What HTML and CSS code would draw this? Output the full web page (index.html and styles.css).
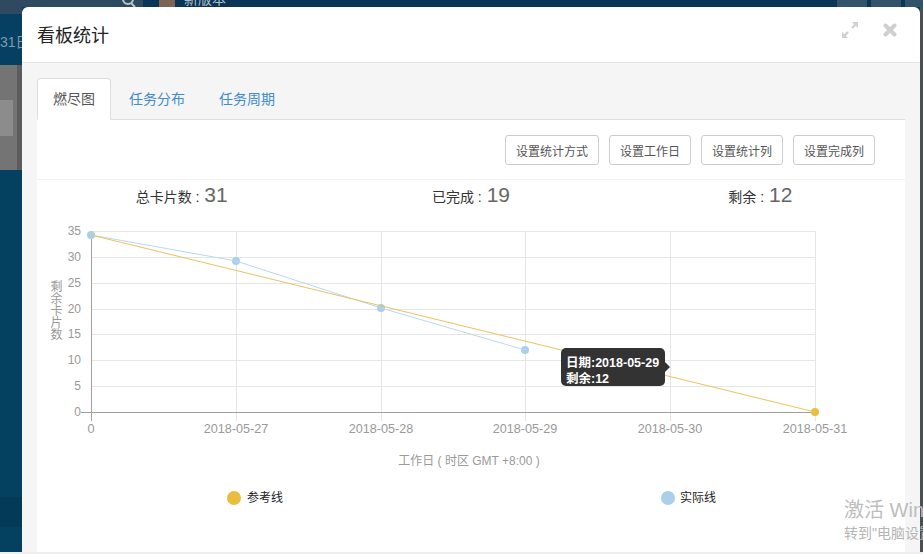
FILE: index.html
```html
<!DOCTYPE html>
<html lang="zh-CN">
<head>
    <meta charset="UTF-8">
    <meta name="viewport" content="width=device-width, initial-scale=1.0">
    <title>看板统计</title>
    <link rel="stylesheet" href="styles.css">
</head>
<body>

<!-- page behind the modal -->
<div class="backdrop">
    <div class="topBar">
        <div class="topSearch">
            <svg width="14" height="7" viewBox="0 0 14 7"><circle cx="6" cy="-1" r="5" fill="none" stroke="#b9c4cc" stroke-width="2"/><path d="M9 3l4 4" stroke="#b9c4cc" stroke-width="2"/></svg>
        </div>
        <div class="topAvatar"></div>
        <div class="topVersion">新版本</div>
        <div class="topIcons">
            <span class="topIcon small"></span>
            <span class="topIcon wide"></span>
            <span class="topIcon"></span>
        </div>
    </div>
    <div class="backMain">
        <div class="side">
            <div class="sideSlate"></div>
            <div class="sideDate">31日</div>
            <div class="sideGray"><div class="sideGrayInner"></div></div>
            <div class="sideBlue"></div>
            <div class="sideDark"></div>
            <div class="sideBlueEnd"></div>
        </div>
        <div class="edge"></div>
    </div>
    <div class="bottomStrip"></div>
</div>

<div class="modal">
    <div class="modalHeader">
        <div class="modalTitle">看板统计</div>
        <div class="modalTools">
            <svg class="toolIcon" width="18" height="18" viewBox="0 0 18 18">
                <path d="M11 1h6v6l-2.200-2.200-3 3-1.600-1.600 3-3zM7 17H1v-6l2.200 2.200 3-3 1.600 1.600-3 3z" fill="#d0d0d0"/>
            </svg>
            <svg class="toolIcon" width="14" height="14" viewBox="0 0 14 14">
                <path d="M2.500 2.500l9 9M11.500 2.500l-9 9" stroke="#cfcfcf" stroke-width="4" stroke-linecap="round"/>
            </svg>
        </div>
    </div>

    <div class="modalBody">
        <ul class="tabs">
            <li class="tab active">燃尽图</li>
            <li class="tab">任务分布</li>
            <li class="tab">任务周期</li>
        </ul>

        <div class="panel">
            <div class="toolbar">
                <button class="btn">设置统计方式</button>
                <button class="btn">设置工作日</button>
                <button class="btn">设置统计列</button>
                <button class="btn">设置完成列</button>
            </div>

            <div class="stats">
                <div class="stat">总卡片数 : <span class="statNum">31</span></div>
                <div class="stat">已完成 : <span class="statNum">19</span></div>
                <div class="stat">剩余 : <span class="statNum">12</span></div>
            </div>

            <div class="chart">
                <!-- viewBox uses page coordinates, plot area is 91..815 x 231..412 -->
                <svg class="chartSvg" width="868" height="330" viewBox="37 212 868 330">
                    <g class="grid">
                        <path d="M91 231H815M91 257H815M91 283H815M91 309H815M91 334H815M91 360H815M91 386H815"/>
                        <path d="M236 231V421M381 231V421M525 231V421M670 231V421M815 231V421"/>
                    </g>
                    <path class="axis" d="M81 412H815M91 231V421"/>

                    <g class="tickY">
                        <text x="81" y="235">35</text>
                        <text x="81" y="261">30</text>
                        <text x="81" y="287">25</text>
                        <text x="81" y="313">20</text>
                        <text x="81" y="338">15</text>
                        <text x="81" y="364">10</text>
                        <text x="81" y="390">5</text>
                        <text x="81" y="416">0</text>
                    </g>
                    <g class="tickX">
                        <text x="91" y="433">0</text>
                        <text x="236" y="433">2018-05-27</text>
                        <text x="381" y="433">2018-05-28</text>
                        <text x="525" y="433">2018-05-29</text>
                        <text x="670" y="433">2018-05-30</text>
                        <text x="815" y="433">2018-05-31</text>
                    </g>
                    <text class="titleY" x="55" y="280">剩余卡片数</text>
                    <text class="titleX" x="469" y="465">工作日 ( 时区 GMT +8:00 )</text>

                    <circle class="dotRef" cx="815" cy="412" r="4"/>
                    <circle class="dotReal" cx="91" cy="235" r="4"/>
                    <circle class="dotReal" cx="236" cy="261" r="4"/>
                    <circle class="dotReal" cx="381" cy="308" r="4"/>
                    <circle class="dotReal" cx="525" cy="350" r="4"/>
                    <polyline class="lineReal" points="91,235 236,261 381,308 525,350"/>
                    <polyline class="lineRef" points="91,235 815,412"/>

                    <circle class="dotRef" cx="234" cy="498" r="7"/>
                    <text class="legend" x="247" y="502">参考线</text>
                    <circle class="dotReal" cx="668" cy="498" r="7"/>
                    <text class="legend" x="680" y="502">实际线</text>
                </svg>
                <div class="tooltip">日期:2018-05-29<br>剩余:12</div>
            </div>
        </div>
    </div>
</div>

<div class="watermark">
    <div class="wmTitle">激活 Windows</div>
    <div class="wmSub">转到"电脑设置"以激活 Windows。</div>
</div>

</body>
</html>
```

FILE: styles.css
```css
* {
  box-sizing: border-box;
}
html, body {
  height: 100%;
}
body {
  margin: 0;
  overflow: hidden;
  position: relative;
  background-color: #04405f;
  font-family: "Liberation Sans", "Noto Sans CJK SC", sans-serif;
  font-size: 14px;
  color: #333;
}

/* behind the modal */
.backdrop {
  display: flex;
  flex-direction: column;
  height: 100%;
}
.topBar {
  display: flex;
  height: 7px;
  flex: none;
  overflow: hidden;
  background-color: #0a3557;
}
.topSearch {
  width: 143px;
  background-color: #2f4a60;
  padding-left: 122px;
}
.topSearch svg {
  display: block;
}
.topAvatar {
  width: 16px;
  margin-left: 16px;
  background-color: #7c6352;
}
.topVersion {
  margin-left: 9px;
  font-size: 14px;
  line-height: 10px;
  margin-top: -6px;
  color: #aebbc5;
}
.topIcons {
  margin-left: auto;
  display: flex;
  gap: 4px;
}
.topIcon {
  width: 18px;
  background-color: #33536b;
}
.topIcon.wide {
  width: 30px;
}
.topIcon.small {
  width: 30px;
}
.backMain {
  flex: 1;
  display: flex;
  justify-content: space-between;
}
.side {
  width: 22px;
  display: flex;
  flex-direction: column;
}
.sideSlate {
  height: 7px;
  background-color: #2f4a60;
}
.sideDate {
  height: 51px;
  padding-top: 18px;
  overflow: hidden;
  white-space: nowrap;
  font-size: 14px;
  line-height: 20px;
  color: #7e9aae;
  background-color: #053f62;
}
.sideGray {
  height: 105px;
  padding-top: 35px;
  background-color: #747474;
  border-right: 5px solid #5c5c5c;
}
.sideGrayInner {
  width: 13px;
  height: 36px;
  background-color: #8c8c8c;
}
.sideBlue {
  flex: 1;
  background-color: #04405f;
}
.sideDark {
  height: 30px;
  background-color: #033a57;
}
.sideBlueEnd {
  height: 25px;
  background-color: #04405f;
}
.edge {
  width: 3px;
  background-color: #4a4f52;
}
.bottomStrip {
  height: 2px;
  flex: none;
  background-color: #eeeeee;
}

/* modal */
.modal {
  position: absolute;
  left: 22px;
  top: 7px;
  width: 898px;
  height: 545px;
  border-radius: 6px 6px 0 0;
  background-color: #fff;
  overflow: hidden;
  display: flex;
  flex-direction: column;
}
.modalHeader {
  display: flex;
  align-items: center;
  justify-content: space-between;
  height: 56px;
  flex: none;
  padding: 0 23px 1px 15px;
  border-bottom: 1px solid #e5e5e5;
}
.modalTitle {
  font-size: 18px;
  color: #222;
}
.modalTools {
  display: flex;
  align-items: center;
  gap: 24px;
  margin-bottom: 9px;
}
.toolIcon {
  display: block;
}
.modalBody {
  flex: 1;
  padding: 15px 15px 0;
  background-color: #f5f5f5;
  display: flex;
  flex-direction: column;
}

.tabs {
  display: flex;
  list-style: none;
  margin: 0;
  padding: 0;
  height: 42px;
  flex: none;
  border-bottom: 1px solid #ddd;
}
.tab {
  height: 42px;
  margin-right: 2px;
  padding: 10px 15px;
  line-height: 20px;
  border: 1px solid transparent;
  border-radius: 4px 4px 0 0;
  font-size: 14px;
  color: #428bca;
}
.tab.active {
  color: #555;
  background-color: #fff;
  border-color: #ddd #ddd #fff;
}

.panel {
  flex: 1;
  background-color: #fff;
}
.toolbar {
  display: flex;
  justify-content: flex-end;
  gap: 10px;
  height: 60px;
  padding: 15px 30px 0 0;
  border-bottom: 1px solid #f2f2f2;
}
.btn {
  height: 30px;
  padding: 0 10px;
  background-color: #fff;
  border: 1px solid #ccc;
  border-radius: 3px;
  font-family: inherit;
  font-size: 12px;
  color: #555;
}
.stats {
  display: flex;
  height: 32px;
  align-items: center;
  padding-bottom: 2px;
}
.stat {
  flex: 1;
  text-align: center;
  font-size: 14px;
  color: #333;
}
.statNum {
  font-size: 21px;
  color: #666;
  margin-left: 1px;
}

/* chart */
.chart {
  position: relative;
}
.chartSvg {
  display: block;
  font-family: "Liberation Sans", "Noto Sans CJK SC", sans-serif;
  font-size: 12px;
}
.grid path {
  fill: none;
  stroke: #e6e6e6;
  stroke-width: 1;
  shape-rendering: crispEdges;
}
.axis {
  fill: none;
  stroke: #a0a0a0;
  stroke-width: 1;
  shape-rendering: crispEdges;
}
.tickY text {
  fill: #999;
  text-anchor: end;
}
.tickX text {
  fill: #999;
  font-size: 12.600px;
  text-anchor: middle;
}
.titleY {
  fill: #999;
  writing-mode: vertical-rl;
}
.titleX {
  fill: #999;
  text-anchor: middle;
}
.lineRef {
  fill: none;
  stroke: #ebc25e;
  stroke-width: 1;
}
.lineReal {
  fill: none;
  stroke: #b8d8ee;
  stroke-width: 1;
}
.dotRef {
  fill: #ebbd3d;
}
.dotReal {
  fill: #a9cfea;
}
.legend {
  fill: #222;
}
.tooltip {
  position: absolute;
  left: 524px;
  top: 136px;
  width: 104px;
  height: 38px;
  padding: 7px 0 0 5px;
  border-radius: 5px;
  background-color: #333;
  color: #fff;
  font-size: 12.500px;
  line-height: 16px;
  font-weight: bold;
  white-space: nowrap;
}
.tooltip::after {
  content: "";
  position: absolute;
  right: -5px;
  top: 14px;
  border-left: 5px solid #333;
  border-top: 5px solid transparent;
  border-bottom: 5px solid transparent;
}

/* windows activation notice */
.watermark {
  position: absolute;
  left: 844px;
  top: 497px;
  width: 79px;
  overflow: hidden;
  white-space: nowrap;
  color: #bdbdbd;
}
.wmTitle {
  font-size: 20px;
  line-height: 26px;
}
.wmSub {
  font-size: 14px;
  line-height: 20px;
  color: #b4b4b4;
}
```
